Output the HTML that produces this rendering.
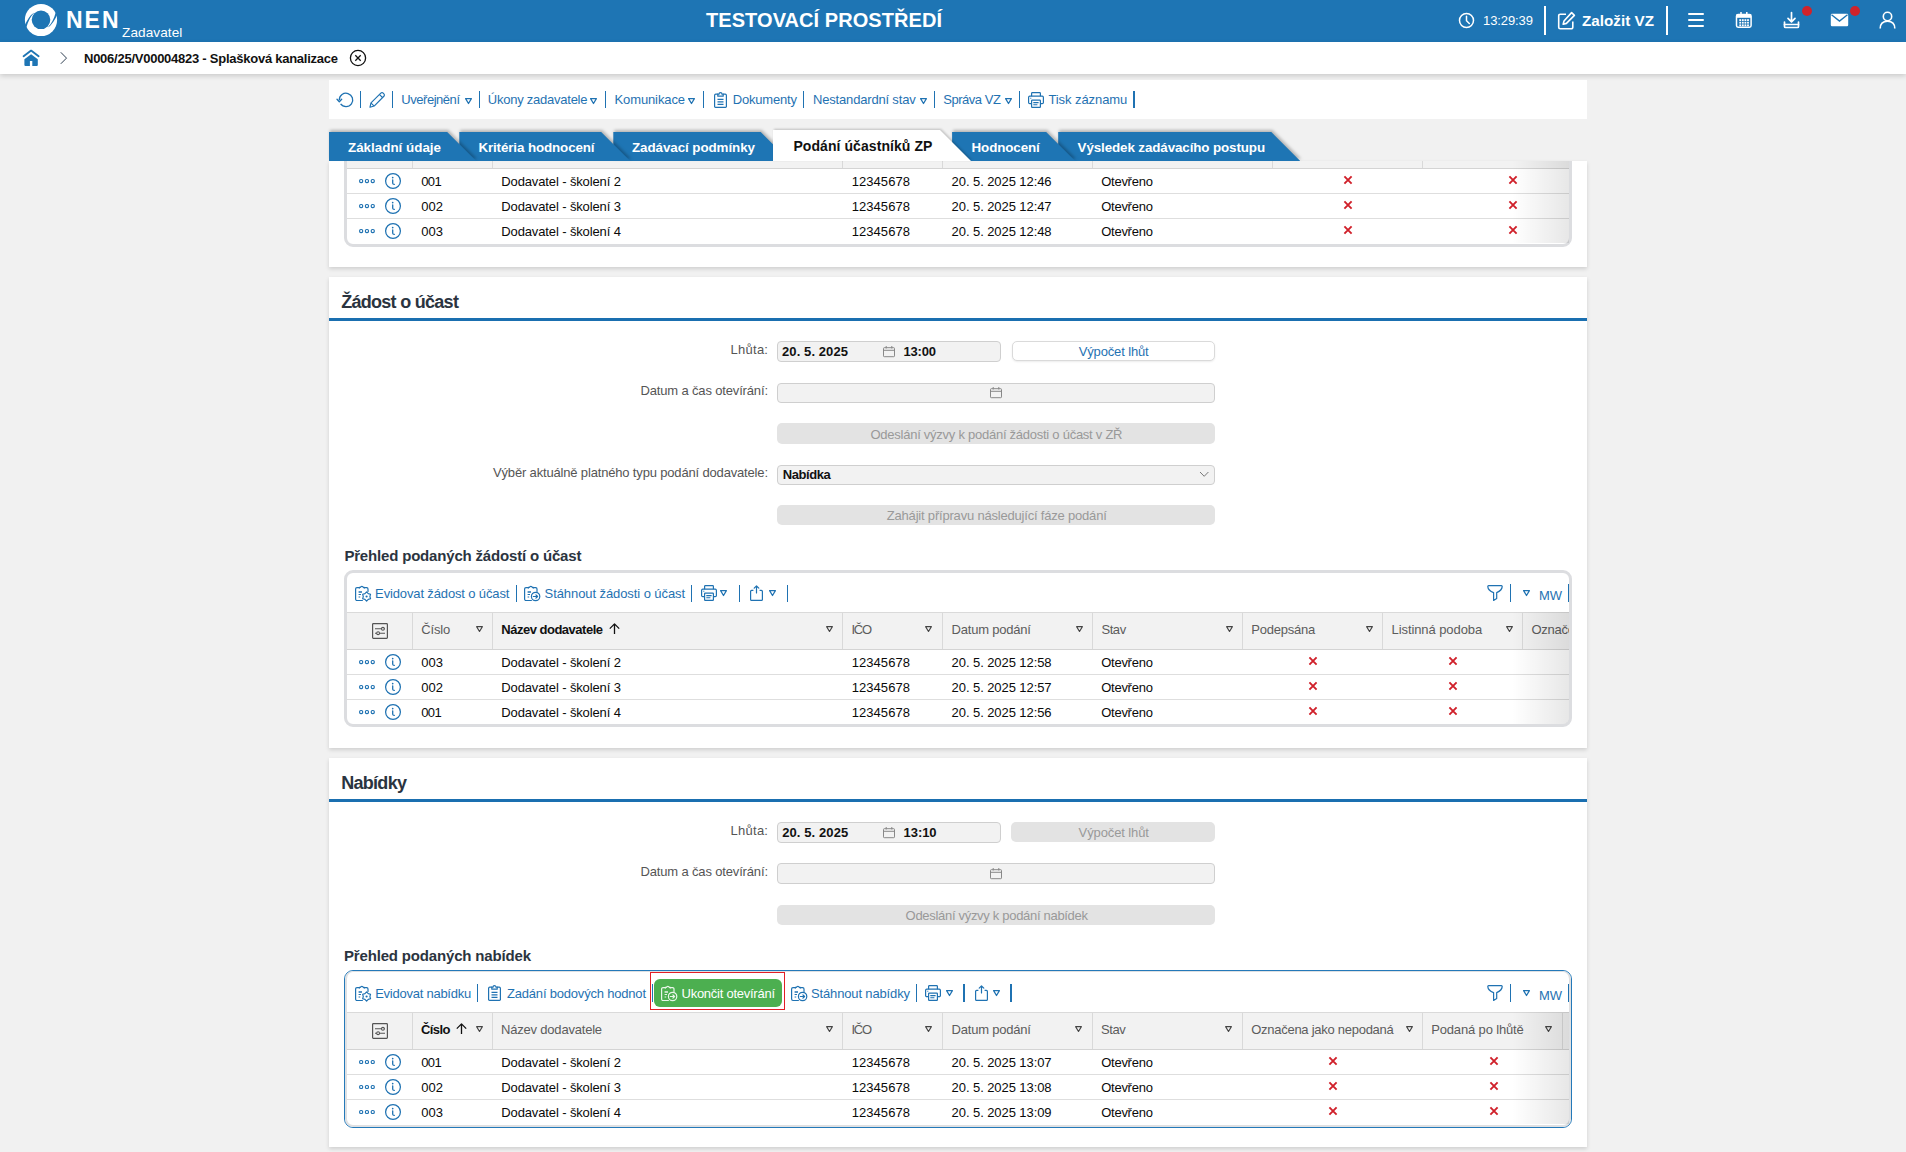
<!DOCTYPE html>
<html><head><meta charset="utf-8"><style>
*{box-sizing:border-box}
html,body{margin:0;padding:0}
body{width:1906px;height:1152px;overflow:hidden;background:#f1f1f1;font-family:"Liberation Sans",sans-serif;position:relative;color:#111;font-size:13px}
.a{position:absolute}
.t{white-space:nowrap}
svg{display:block;overflow:visible}
.panel{background:#fff;box-shadow:0 2px 4px rgba(0,0,0,.14)}
.clip{overflow:hidden}
</style></head><body>
<div class="a" style="left:0;top:0;width:1906px;height:42px;background:#1e75b4"></div>
<svg class="a" style="left:22px;top:1px" width="40" height="40" viewBox="22 1 40 40">
  <circle cx="41" cy="20" r="16.1" fill="#fff"/>
  <circle cx="41" cy="19.8" r="9.3" fill="#1e75b4"/>
  <path d="M34.3 12.4 Q28.8 15.5 24 27 L26.3 27.6 Q28.6 18.5 34.3 12.4 Z" fill="#1e75b4"/>
  <path d="M47.7 27.6 Q53.2 24.5 58 13 L55.7 12.4 Q53.4 21.5 47.7 27.6 Z" fill="#1e75b4"/>
 </svg>
<div class="a t" style="left:66.0px;top:9.03px;font-size:23px;line-height:23px;font-weight:bold;color:#fff;letter-spacing:1.969px;">NEN</div>
<div class="a t" style="left:122.0px;top:26.09px;font-size:13.6px;line-height:13.6px;color:#fff;letter-spacing:0.075px;">Zadavatel</div>
<div class="a t" style="left:706.0px;top:10.37px;font-size:20px;line-height:20px;font-weight:bold;color:#fff;letter-spacing:0.064px;">TESTOVACÍ PROSTŘEDÍ</div>
<svg class="a" style="left:1458px;top:12px" width="17" height="17" viewBox="0 0 17 17" fill="none" stroke="#fff" stroke-width="1.5"><circle cx="8.5" cy="8.5" r="7"/><path d="M8.5 4.2V8.7L11.3 11.5" stroke-linecap="round"/></svg>
<div class="a t" style="left:1483.0px;top:14.00px;font-size:13px;line-height:13px;color:#fff;letter-spacing:-0.087px;">13:29:39</div>
<div class="a" style="left:1543.5px;top:6px;width:2px;height:29px;background:#fff"></div>
<svg class="a" style="left:1557px;top:11px" width="19" height="19" viewBox="0 0 19 19" fill="none" stroke="#fff" stroke-width="1.6" stroke-linejoin="round"><path d="M9 3.2H3.2A1.5 1.5 0 0 0 1.7 4.7V16.3A1.5 1.5 0 0 0 3.2 17.8H14.3A1.5 1.5 0 0 0 15.8 16.3V10.5"/><path d="M14.6 1.6L17.4 4.4L9.4 12.4L6.2 13.2L7 10Z"/></svg>
<div class="a t" style="left:1582.0px;top:13.33px;font-size:15.2px;line-height:15.2px;font-weight:bold;color:#fff;letter-spacing:0.031px;">Založit VZ</div>
<div class="a" style="left:1666px;top:6px;width:2px;height:29px;background:#fff"></div>
<div class="a" style="left:1688px;top:12.7px;width:16px;height:2.7px;background:#fff;border-radius:1.4px"></div>
<div class="a" style="left:1688px;top:18.7px;width:16px;height:2.7px;background:#fff;border-radius:1.4px"></div>
<div class="a" style="left:1688px;top:24.7px;width:16px;height:2.7px;background:#fff;border-radius:1.4px"></div>
<svg class="a" style="left:1734px;top:10px" width="20" height="20" viewBox="1734 10 20 20"><rect x="1736.5" y="14.6" width="14.6" height="12.6" rx="1.6" fill="none" stroke="#fff" stroke-width="1.5"/><rect x="1736.5" y="14.6" width="14.6" height="3.2" fill="#fff"/><path d="M1741 12V16M1746.8 12V16" stroke="#fff" stroke-width="1.5"/><rect x="1739.3" y="19.2" width="1.8" height="1.8" fill="#fff"/><rect x="1739.3" y="21.8" width="1.8" height="1.8" fill="#fff"/><rect x="1739.3" y="24.4" width="1.8" height="1.8" fill="#fff"/><rect x="1741.9" y="19.2" width="1.8" height="1.8" fill="#fff"/><rect x="1741.9" y="21.8" width="1.8" height="1.8" fill="#fff"/><rect x="1741.9" y="24.4" width="1.8" height="1.8" fill="#fff"/><rect x="1744.5" y="19.2" width="1.8" height="1.8" fill="#fff"/><rect x="1744.5" y="21.8" width="1.8" height="1.8" fill="#fff"/><rect x="1744.5" y="24.4" width="1.8" height="1.8" fill="#fff"/><rect x="1747.1" y="19.2" width="1.8" height="1.8" fill="#fff"/><rect x="1747.1" y="21.8" width="1.8" height="1.8" fill="#fff"/><rect x="1747.1" y="24.4" width="1.8" height="1.8" fill="#fff"/></svg>
<svg class="a" style="left:1783px;top:11px" width="17" height="18" viewBox="0 0 17 18" fill="none" stroke="#fff" stroke-width="1.7" stroke-linecap="round" stroke-linejoin="round"><path d="M8.5 1.5V10.5M5 7.3L8.5 10.8L12 7.3"/><path d="M1.5 11V15.5A1 1 0 0 0 2.5 16.5H14.5A1 1 0 0 0 15.5 15.5V11"/><path d="M1.5 13.5H15.5"/></svg>
<div class="a" style="left:1802px;top:6px;width:10px;height:10px;border-radius:50%;background:#d0232b"></div>
<svg class="a" style="left:1830px;top:13px" width="19" height="14" viewBox="0 0 19 14"><rect x="0.8" y="0.8" width="17.4" height="12.4" rx="1.2" fill="#fff"/><path d="M1.5 1.8L9.5 8L17.5 1.8" fill="none" stroke="#1e75b4" stroke-width="1.4"/></svg>
<div class="a" style="left:1850px;top:6px;width:10px;height:10px;border-radius:50%;background:#d0232b"></div>
<svg class="a" style="left:1879px;top:11px" width="17" height="18" viewBox="0 0 17 18" fill="none" stroke="#fff" stroke-width="1.6"><circle cx="8.5" cy="5.5" r="4.2"/><path d="M1.2 17.5C1.2 12.5 4.5 10.2 8.5 10.2S15.8 12.5 15.8 17.5"/></svg>
<div class="a" style="left:0;top:42px;width:1906px;height:32px;background:#fff;box-shadow:0 2px 5px rgba(0,0,0,.16)"></div>
<svg class="a" style="left:20px;top:47px" width="22" height="22" viewBox="20 47 22 22"><path d="M23.6 56.2L31.1 50.6L38.6 56.2" fill="none" stroke="#1e75b4" stroke-width="1.9" stroke-linecap="round" stroke-linejoin="round"/><path d="M31.1 54.3L37.8 59.2V65A1 1 0 0 1 36.8 66H32.3V61H29.9V66H25.4A1 1 0 0 1 24.4 65V59.2Z" fill="#1e75b4"/></svg>
<svg class="a" style="left:58px;top:50px" width="11" height="16" viewBox="58 50 11 16" fill="none" stroke="#2d3e50" stroke-width="1"><path d="M60.8 52.3L66.5 58.1L60.8 63.8"/></svg>
<div class="a t" style="left:84.0px;top:52.00px;font-size:13px;line-height:13px;font-weight:bold;color:#111;letter-spacing:-0.251px;">N006/25/V00004823 - Splašková kanalizace</div>
<svg class="a" style="left:349px;top:48.7px" width="18" height="18" viewBox="0 0 18 18" fill="none" stroke="#111" stroke-width="1.3"><circle cx="9" cy="9" r="7.6"/><path d="M6.3 6.3L11.7 11.7M11.7 6.3L6.3 11.7"/></svg>
<div class="a" style="left:329px;top:80px;width:1258px;height:39px;background:#fff"></div>
<svg class="a" style="left:336.2px;top:91px" width="20" height="18" viewBox="336.2 91 20 18" ><path d="M339.50 100.00A6.7 6.7 0 1 1 340.80 103.90" fill="none" stroke="#1f72b2" stroke-width="1.3"/><path d="M337.20 99.20L339.50 101.80L341.90 99.20" fill="none" stroke="#1f72b2" stroke-width="1.3" stroke-linecap="round" stroke-linejoin="round"/></svg>
<div class="a" style="left:359.65px;top:91px;width:1.5px;height:17px;background:#1f72b2"></div>
<svg class="a" style="left:367px;top:89px" width="21" height="21" viewBox="367 89 21 21" ><g transform="translate(370 107.4) scale(.9) translate(-370 -107.4)"><path d="M370 107.2L371.1 102.4L382 91.6A1.9 1.9 0 0 1 384.7 91.6L385.4 92.3A1.9 1.9 0 0 1 385.4 95L374.6 105.9Z" fill="none" stroke="#1f72b2" stroke-width="1.3" stroke-linejoin="round"/><path d="M371.2 102.6L374.4 105.8M380.6 93.1L383.9 96.4" stroke="#1f72b2" stroke-width="1.25"/></g></svg>
<div class="a" style="left:391.75px;top:91px;width:1.5px;height:17px;background:#1f72b2"></div>
<div class="a t" style="left:401.3px;top:92.50px;font-size:13px;line-height:13px;color:#1f72b2;letter-spacing:-0.464px;">Uveřejnění</div>
<svg class="a" style="left:464px;top:96.6px" width="9" height="8" viewBox="464 96.6 9 8" ><path d="M465.6 98.19999999999999H471.4L468.5 103.1Z" fill="none" stroke="#1f72b2" stroke-width="1.25" stroke-linejoin="round"/></svg>
<div class="a" style="left:478.75px;top:91px;width:1.5px;height:17px;background:#1f72b2"></div>
<div class="a t" style="left:487.8px;top:92.50px;font-size:13px;line-height:13px;color:#1f72b2;letter-spacing:-0.243px;">Úkony zadavatele</div>
<svg class="a" style="left:589px;top:96.6px" width="9" height="8" viewBox="589 96.6 9 8" ><path d="M590.6 98.19999999999999H596.4L593.5 103.1Z" fill="none" stroke="#1f72b2" stroke-width="1.25" stroke-linejoin="round"/></svg>
<div class="a" style="left:604.75px;top:91px;width:1.5px;height:17px;background:#1f72b2"></div>
<div class="a t" style="left:614.5px;top:92.50px;font-size:13px;line-height:13px;color:#1f72b2;letter-spacing:-0.116px;">Komunikace</div>
<svg class="a" style="left:687px;top:96.6px" width="9" height="8" viewBox="687 96.6 9 8" ><path d="M688.6 98.19999999999999H694.4L691.5 103.1Z" fill="none" stroke="#1f72b2" stroke-width="1.25" stroke-linejoin="round"/></svg>
<div class="a" style="left:702.75px;top:91px;width:1.5px;height:17px;background:#1f72b2"></div>
<svg class="a" style="left:713px;top:91px" width="15" height="18" viewBox="713 91 15 18" ><path d="M718 94.2H715.8A1.2 1.2 0 0 0 714.6 95.4V106.6A1.2 1.2 0 0 0 715.8 107.4H725.2A1.2 1.2 0 0 0 726.4 106.6V95.4A1.2 1.2 0 0 0 725.2 94.2H723" fill="none" stroke="#1f72b2" stroke-width="1.2"/><path d="M717.8 96.2V94.2H719A1.5 1.5 0 0 1 722 94.2H723.2V96.2Z" fill="none" stroke="#1f72b2" stroke-width="1.2" stroke-linejoin="round"/><path d="M717.5 99.3H723.5M717.5 101.8H723.5M717.5 104.3H723.5" stroke="#1f72b2" stroke-width="1.3"/></svg>
<div class="a t" style="left:732.7px;top:92.50px;font-size:13px;line-height:13px;color:#1f72b2;letter-spacing:-0.181px;">Dokumenty</div>
<div class="a" style="left:802.75px;top:91px;width:1.5px;height:17px;background:#1f72b2"></div>
<div class="a t" style="left:813.0px;top:92.50px;font-size:13px;line-height:13px;color:#1f72b2;letter-spacing:-0.176px;">Nestandardní stav</div>
<svg class="a" style="left:918.8px;top:96.6px" width="9" height="8" viewBox="918.8 96.6 9 8" ><path d="M920.4 98.19999999999999H926.1999999999999L923.3 103.1Z" fill="none" stroke="#1f72b2" stroke-width="1.25" stroke-linejoin="round"/></svg>
<div class="a" style="left:933.75px;top:91px;width:1.5px;height:17px;background:#1f72b2"></div>
<div class="a t" style="left:943.3px;top:92.50px;font-size:13px;line-height:13px;color:#1f72b2;letter-spacing:-0.478px;">Správa VZ</div>
<svg class="a" style="left:1003.8px;top:96.6px" width="9" height="8" viewBox="1003.8 96.6 9 8" ><path d="M1005.4 98.19999999999999H1011.1999999999999L1008.3 103.1Z" fill="none" stroke="#1f72b2" stroke-width="1.25" stroke-linejoin="round"/></svg>
<div class="a" style="left:1018.75px;top:91px;width:1.5px;height:17px;background:#1f72b2"></div>
<svg class="a" style="left:1027.2px;top:91.2px" width="18" height="18" viewBox="1027.2 91.2 18 18" ><path d="M1031.8 96.4V93.60000000000001A0.8 0.8 0 0 1 1032.6000000000001 92.8H1039.8A0.8 0.8 0 0 1 1040.6000000000001 93.60000000000001V96.4" fill="none" stroke="#1f72b2" stroke-width="1.2"/><path d="M1031.8 103.8H1030.0A1.2 1.2 0 0 1 1028.8 102.60000000000001V97.60000000000001A1.2 1.2 0 0 1 1030.0 96.4H1042.4A1.2 1.2 0 0 1 1043.6000000000001 97.60000000000001V102.60000000000001A1.2 1.2 0 0 1 1042.4 103.8H1040.6000000000001" fill="none" stroke="#1f72b2" stroke-width="1.2"/><rect x="1031.8" y="100.4" width="8.8" height="7.2" rx="0.6" fill="none" stroke="#1f72b2" stroke-width="1.2"/><path d="M1033.5 102.8H1038.8M1033.5 105.0H1037.6000000000001M1030.5 98.5H1031.5" stroke="#1f72b2" stroke-width="1.1"/></svg>
<div class="a t" style="left:1048.4px;top:92.50px;font-size:13px;line-height:13px;color:#1f72b2;letter-spacing:-0.074px;">Tisk záznamu</div>
<div class="a" style="left:1133.05px;top:91px;width:1.5px;height:17px;background:#1f72b2"></div>
<div class="a" style="left:0;top:0;width:1906px;height:170px;z-index:16;filter:drop-shadow(1.4px -1.1px 1.4px rgba(0,0,0,.25));pointer-events:none"><div class="a" style="left:329px;top:132px;width:147.2px;height:29px;background:#1e75b4;clip-path:polygon(0 0,118.19999999999999px 0,100% 100%,0 100%)"></div></div>
<div class="a t" style="left:348.0px;top:140.56px;font-size:13.4px;line-height:13.4px;font-weight:bold;color:#fff;letter-spacing:-0.001px;z-index:30">Základní údaje</div>
<div class="a" style="left:0;top:0;width:1906px;height:170px;z-index:15;filter:drop-shadow(1.4px -1.1px 1.4px rgba(0,0,0,.25));pointer-events:none"><div class="a" style="left:459.3px;top:132px;width:170.90000000000003px;height:29px;background:#1e75b4;clip-path:polygon(0 0,141.90000000000003px 0,100% 100%,0 100%)"></div></div>
<div class="a t" style="left:478.4px;top:140.56px;font-size:13.4px;line-height:13.4px;font-weight:bold;color:#fff;letter-spacing:-0.124px;z-index:30">Kritéria hodnocení</div>
<div class="a" style="left:0;top:0;width:1906px;height:170px;z-index:14;filter:drop-shadow(1.4px -1.1px 1.4px rgba(0,0,0,.25));pointer-events:none"><div class="a" style="left:613.3px;top:132px;width:176.4000000000001px;height:29px;background:#1e75b4;clip-path:polygon(0 0,147.4000000000001px 0,100% 100%,0 100%)"></div></div>
<div class="a t" style="left:632.0px;top:140.56px;font-size:13.4px;line-height:13.4px;font-weight:bold;color:#fff;letter-spacing:-0.080px;z-index:30">Zadávací podmínky</div>
<div class="a" style="left:0;top:0;width:1906px;height:170px;z-index:20;filter:drop-shadow(1.2px -0.3px 1px rgba(0,0,0,.2));pointer-events:none"><div class="a" style="left:773px;top:130px;width:198px;height:31px;background:#fff;clip-path:polygon(0 0,167px 0,100% 100%,0 100%)"></div></div>
<div class="a t" style="left:793.4px;top:138.85px;font-size:14px;line-height:14px;font-weight:bold;color:#111;letter-spacing:0.072px;z-index:30">Podání účastníků ZP</div>
<div class="a" style="left:0;top:0;width:1906px;height:170px;z-index:13;filter:drop-shadow(1.4px -1.1px 1.4px rgba(0,0,0,.25));pointer-events:none"><div class="a" style="left:952.1px;top:132px;width:123.10000000000002px;height:29px;background:#1e75b4;clip-path:polygon(0 0,94.10000000000002px 0,100% 100%,0 100%)"></div></div>
<div class="a t" style="left:971.5px;top:140.56px;font-size:13.4px;line-height:13.4px;font-weight:bold;color:#fff;letter-spacing:-0.111px;z-index:30">Hodnocení</div>
<div class="a" style="left:0;top:0;width:1906px;height:170px;z-index:12;filter:drop-shadow(1.4px -1.1px 1.4px rgba(0,0,0,.25));pointer-events:none"><div class="a" style="left:1058.2px;top:132px;width:242.0999999999999px;height:29px;background:#1e75b4;clip-path:polygon(0 0,213.0999999999999px 0,100% 100%,0 100%)"></div></div>
<div class="a t" style="left:1077.6px;top:140.56px;font-size:13.4px;line-height:13.4px;font-weight:bold;color:#fff;letter-spacing:-0.116px;z-index:30">Výsledek zadávacího postupu</div>
<div class="a panel" style="left:329px;top:161px;width:1258px;height:106px;"></div>
<div class="a" style="left:329px;top:161px;width:1258px;height:106px;overflow:hidden"><div class="a" style="left:-329px;top:-161px;width:1906px;height:1152px">
<div class="a" style="left:344px;top:120px;width:1228px;height:127px;border:3px solid #dcdde0;border-radius:9px;background:#fff"></div>
<div class="a" style="left:347px;top:123px;width:1222px;height:45px;background:#f2f2f2"></div>
<div class="a" style="left:347px;top:168px;width:1222px;height:1px;background:#d4d4d4"></div>
<div class="a" style="left:412px;top:123px;width:1px;height:45px;background:#d9d9d9"></div>
<div class="a" style="left:492px;top:123px;width:1px;height:45px;background:#d9d9d9"></div>
<div class="a" style="left:842px;top:123px;width:1px;height:45px;background:#d9d9d9"></div>
<div class="a" style="left:942px;top:123px;width:1px;height:45px;background:#d9d9d9"></div>
<div class="a" style="left:1092px;top:123px;width:1px;height:45px;background:#d9d9d9"></div>
<div class="a" style="left:1272px;top:123px;width:1px;height:45px;background:#d9d9d9"></div>
<div class="a" style="left:1422px;top:123px;width:1px;height:45px;background:#d9d9d9"></div>
<svg class="a" style="left:358px;top:177px" width="18" height="8" viewBox="358 177 18 8" ><rect x="359.60" y="179.45" width="3.1" height="3.1" rx="1.3" fill="none" stroke="#1f72b2" stroke-width="1.15"/><rect x="365.40" y="179.45" width="3.1" height="3.1" rx="1.3" fill="none" stroke="#1f72b2" stroke-width="1.15"/><rect x="371.20" y="179.45" width="3.1" height="3.1" rx="1.3" fill="none" stroke="#1f72b2" stroke-width="1.15"/></svg>
<svg class="a" style="left:384px;top:172px" width="18" height="18" viewBox="384 172 18 18" ><circle cx="393" cy="181" r="7.4" fill="none" stroke="#1f72b2" stroke-width="1.25"/><path d="M392.7 179.8V183.2Q392.8 184.3 394.3 184.4" fill="none" stroke="#1f72b2" stroke-width="1.3" stroke-linecap="round"/><circle cx="392.7" cy="177.6" r="0.85" fill="#1f72b2"/></svg>
<div class="a t" style="left:421.2px;top:175.30px;font-size:13px;line-height:13px;color:#0a0a0a;letter-spacing:-0.602px;">001</div>
<div class="a t" style="left:501.3px;top:175.30px;font-size:13px;line-height:13px;color:#0a0a0a;letter-spacing:-0.126px;">Dodavatel - školení 2</div>
<div class="a t" style="left:851.8px;top:175.30px;font-size:13px;line-height:13px;color:#0a0a0a;letter-spacing:0.037px;">12345678</div>
<div class="a t" style="left:951.6px;top:175.30px;font-size:13px;line-height:13px;color:#0a0a0a;letter-spacing:-0.075px;">20. 5. 2025 12:46</div>
<div class="a t" style="left:1101.2px;top:175.30px;font-size:13px;line-height:13px;color:#0a0a0a;letter-spacing:-0.255px;">Otevřeno</div>
<svg class="a" style="left:1342.1px;top:174.2px" width="12" height="12" viewBox="1342.1 174.2 12 12" ><path d="M1344.5 176.6L1351.6999999999998 183.79999999999998M1351.6999999999998 176.6L1344.5 183.79999999999998" stroke="#d0202a" stroke-width="1.9"/></svg>
<svg class="a" style="left:1507.1px;top:174.2px" width="12" height="12" viewBox="1507.1 174.2 12 12" ><path d="M1509.5 176.6L1516.6999999999998 183.79999999999998M1516.6999999999998 176.6L1509.5 183.79999999999998" stroke="#d0202a" stroke-width="1.9"/></svg>
<div class="a" style="left:347px;top:193px;width:1222px;height:1px;background:#dedede"></div>
<svg class="a" style="left:358px;top:202px" width="18" height="8" viewBox="358 202 18 8" ><rect x="359.60" y="204.45" width="3.1" height="3.1" rx="1.3" fill="none" stroke="#1f72b2" stroke-width="1.15"/><rect x="365.40" y="204.45" width="3.1" height="3.1" rx="1.3" fill="none" stroke="#1f72b2" stroke-width="1.15"/><rect x="371.20" y="204.45" width="3.1" height="3.1" rx="1.3" fill="none" stroke="#1f72b2" stroke-width="1.15"/></svg>
<svg class="a" style="left:384px;top:197px" width="18" height="18" viewBox="384 197 18 18" ><circle cx="393" cy="206" r="7.4" fill="none" stroke="#1f72b2" stroke-width="1.25"/><path d="M392.7 204.8V208.2Q392.8 209.3 394.3 209.4" fill="none" stroke="#1f72b2" stroke-width="1.3" stroke-linecap="round"/><circle cx="392.7" cy="202.6" r="0.85" fill="#1f72b2"/></svg>
<div class="a t" style="left:421.2px;top:200.30px;font-size:13px;line-height:13px;color:#0a0a0a;letter-spacing:0.048px;">002</div>
<div class="a t" style="left:501.3px;top:200.30px;font-size:13px;line-height:13px;color:#0a0a0a;letter-spacing:-0.126px;">Dodavatel - školení 3</div>
<div class="a t" style="left:851.8px;top:200.30px;font-size:13px;line-height:13px;color:#0a0a0a;letter-spacing:0.037px;">12345678</div>
<div class="a t" style="left:951.6px;top:200.30px;font-size:13px;line-height:13px;color:#0a0a0a;letter-spacing:-0.075px;">20. 5. 2025 12:47</div>
<div class="a t" style="left:1101.2px;top:200.30px;font-size:13px;line-height:13px;color:#0a0a0a;letter-spacing:-0.255px;">Otevřeno</div>
<svg class="a" style="left:1342.1px;top:199.2px" width="12" height="12" viewBox="1342.1 199.2 12 12" ><path d="M1344.5 201.6L1351.6999999999998 208.79999999999998M1351.6999999999998 201.6L1344.5 208.79999999999998" stroke="#d0202a" stroke-width="1.9"/></svg>
<svg class="a" style="left:1507.1px;top:199.2px" width="12" height="12" viewBox="1507.1 199.2 12 12" ><path d="M1509.5 201.6L1516.6999999999998 208.79999999999998M1516.6999999999998 201.6L1509.5 208.79999999999998" stroke="#d0202a" stroke-width="1.9"/></svg>
<div class="a" style="left:347px;top:218px;width:1222px;height:1px;background:#dedede"></div>
<svg class="a" style="left:358px;top:227px" width="18" height="8" viewBox="358 227 18 8" ><rect x="359.60" y="229.45" width="3.1" height="3.1" rx="1.3" fill="none" stroke="#1f72b2" stroke-width="1.15"/><rect x="365.40" y="229.45" width="3.1" height="3.1" rx="1.3" fill="none" stroke="#1f72b2" stroke-width="1.15"/><rect x="371.20" y="229.45" width="3.1" height="3.1" rx="1.3" fill="none" stroke="#1f72b2" stroke-width="1.15"/></svg>
<svg class="a" style="left:384px;top:222px" width="18" height="18" viewBox="384 222 18 18" ><circle cx="393" cy="231" r="7.4" fill="none" stroke="#1f72b2" stroke-width="1.25"/><path d="M392.7 229.8V233.2Q392.8 234.3 394.3 234.4" fill="none" stroke="#1f72b2" stroke-width="1.3" stroke-linecap="round"/><circle cx="392.7" cy="227.6" r="0.85" fill="#1f72b2"/></svg>
<div class="a t" style="left:421.2px;top:225.30px;font-size:13px;line-height:13px;color:#0a0a0a;letter-spacing:0.048px;">003</div>
<div class="a t" style="left:501.3px;top:225.30px;font-size:13px;line-height:13px;color:#0a0a0a;letter-spacing:-0.126px;">Dodavatel - školení 4</div>
<div class="a t" style="left:851.8px;top:225.30px;font-size:13px;line-height:13px;color:#0a0a0a;letter-spacing:0.037px;">12345678</div>
<div class="a t" style="left:951.6px;top:225.30px;font-size:13px;line-height:13px;color:#0a0a0a;letter-spacing:-0.075px;">20. 5. 2025 12:48</div>
<div class="a t" style="left:1101.2px;top:225.30px;font-size:13px;line-height:13px;color:#0a0a0a;letter-spacing:-0.255px;">Otevřeno</div>
<svg class="a" style="left:1342.1px;top:224.2px" width="12" height="12" viewBox="1342.1 224.2 12 12" ><path d="M1344.5 226.6L1351.6999999999998 233.79999999999998M1351.6999999999998 226.6L1344.5 233.79999999999998" stroke="#d0202a" stroke-width="1.9"/></svg>
<svg class="a" style="left:1507.1px;top:224.2px" width="12" height="12" viewBox="1507.1 224.2 12 12" ><path d="M1509.5 226.6L1516.6999999999998 233.79999999999998M1516.6999999999998 226.6L1509.5 233.79999999999998" stroke="#d0202a" stroke-width="1.9"/></svg>
<div class="a" style="left:1512px;top:123px;width:57px;height:120px;background:linear-gradient(to right,rgba(0,0,0,0),rgba(0,0,0,.095))"></div>
</div></div>
<div class="a panel" style="left:329px;top:277px;width:1258px;height:471px;"></div>
<div class="a t" style="left:341.2px;top:293.16px;font-size:18px;line-height:18px;font-weight:bold;color:#2b3440;letter-spacing:-0.718px;">Žádost o účast</div>
<div class="a" style="left:329px;top:318px;width:1258px;height:3px;background:#1a6fb0"></div>
<div class="a t" style="left:730.6px;top:343.40px;font-size:13px;line-height:13px;color:#555;letter-spacing:0.249px;">Lhůta:</div>
<div class="a" style="left:777px;top:341px;width:224px;height:21px;background:#f2f2f2;border:1px solid #cfcfcf;border-radius:4px"></div>
<div class="a t" style="left:782.0px;top:345.00px;font-size:13px;line-height:13px;font-weight:bold;color:#111;letter-spacing:0.094px;">20. 5. 2025</div>
<svg class="a" style="left:882px;top:344.5px" width="14" height="13" viewBox="882 344.5 14 13" ><rect x="883.5" y="347.2" width="11" height="9" rx="0.8" fill="none" stroke="#888" stroke-width="1"/><path d="M883.5 349.8H894.5M886.2 345.5V348.0M891.8 345.5V348.0" stroke="#888" stroke-width="1"/></svg>
<div class="a t" style="left:903.5px;top:345.00px;font-size:13px;line-height:13px;font-weight:bold;color:#111;letter-spacing:-0.188px;">13:00</div>
<div class="a" style="left:1011.5px;top:341px;width:203px;height:20px;background:#fff;border:1px solid #dadada;border-radius:5px;box-shadow:0 1px 2px rgba(0,0,0,.08)"></div>
<div class="a t" style="left:1078.7px;top:344.70px;font-size:13px;line-height:13px;color:#1f72b2;letter-spacing:-0.141px;">Výpočet lhůt</div>
<div class="a t" style="left:640.5px;top:384.10px;font-size:13px;line-height:13px;color:#555;letter-spacing:-0.156px;">Datum a čas otevírání:</div>
<div class="a" style="left:777px;top:382.5px;width:438px;height:20.5px;background:#f2f2f2;border:1px solid #cfcfcf;border-radius:4px"></div>
<svg class="a" style="left:989px;top:385.5px" width="14" height="13" viewBox="989 385.5 14 13" ><rect x="990.5" y="388.2" width="11" height="9" rx="0.8" fill="none" stroke="#888" stroke-width="1"/><path d="M990.5 390.8H1001.5M993.2 386.5V389.0M998.8 386.5V389.0" stroke="#888" stroke-width="1"/></svg>
<div class="a" style="left:777px;top:423px;width:438px;height:21px;background:#e3e3e3;border-radius:5px"></div>
<div class="a t" style="left:870.5px;top:428.00px;font-size:13px;line-height:13px;color:#999;letter-spacing:-0.256px;">Odeslání výzvy k podání žádosti o účast v ZŘ</div>
<div class="a t" style="left:493.0px;top:466.00px;font-size:13px;line-height:13px;color:#555;letter-spacing:-0.165px;">Výběr aktuálně platného typu podání dodavatele:</div>
<div class="a" style="left:777px;top:464.5px;width:438px;height:20.5px;background:#f2f2f2;border:1px solid #cfcfcf;border-radius:4px"></div>
<div class="a t" style="left:782.7px;top:468.00px;font-size:13px;line-height:13px;font-weight:bold;color:#111;letter-spacing:-0.430px;">Nabídka</div>
<svg class="a" style="left:1199.3px;top:470.8px" width="10" height="7" viewBox="1199.3 470.8 10 7" ><path d="M1200.3 471.8L1204.5 476.1L1208.7 471.8" fill="none" stroke="#777" stroke-width="1"/></svg>
<div class="a" style="left:777px;top:505px;width:438px;height:20px;background:#e3e3e3;border-radius:5px"></div>
<div class="a t" style="left:886.8px;top:509.30px;font-size:13px;line-height:13px;color:#999;letter-spacing:-0.196px;">Zahájit přípravu následující fáze podání</div>
<div class="a t" style="left:344.4px;top:547.80px;font-size:15px;line-height:15px;font-weight:bold;color:#2b3440;letter-spacing:-0.179px;">Přehled podaných žádostí o účast</div>
<div class="a" style="left:344px;top:570px;width:1228px;height:157px;border:3px solid #dcdde0;border-radius:9px;background:#fff;overflow:hidden"><div class="a" style="left:-347px;top:-573px;width:1906px;height:1152px">
<svg class="a" style="left:354px;top:584px" width="18" height="18" viewBox="354 584 18 18" ><path d="M359.6 587.6H357A1.4 1.4 0 0 0 355.6 589V599.1A1.4 1.4 0 0 0 357 600.5H362.4" fill="none" stroke="#1f72b2" stroke-width="1.2" stroke-linecap="round"/><path d="M364 587.6H366.6A1.4 1.4 0 0 1 368 589V591.5" fill="none" stroke="#1f72b2" stroke-width="1.2" stroke-linecap="round"/><path d="M359.4 588.6V587.4H360.4A1.5 1.5 0 0 1 363.3 587.4H364.3V588.6" fill="none" stroke="#1f72b2" stroke-width="1.2" stroke-linejoin="round"/><path d="M358.6 592H362" stroke="#1f72b2" stroke-width="1.5"/><path d="M358.6 594.5H361M358.6 597H360.2" stroke="#1f72b2" stroke-width="1.2"/><path d="M366.60 591.90L368.25 593.64L370.58 594.20L369.90 596.50L370.58 598.80L368.25 599.36L366.60 601.10L364.95 599.36L362.62 598.80L363.30 596.50L362.62 594.20L364.95 593.64Z" fill="none" stroke="#1f72b2" stroke-width="1.15" stroke-linejoin="round"/><circle cx="366.6" cy="596.5" r="1.1" fill="#1f72b2"/></svg>
<div class="a t" style="left:375.1px;top:587.20px;font-size:13px;line-height:13px;color:#1f72b2;letter-spacing:-0.137px;">Evidovat žádost o účast</div>
<div class="a" style="left:515.75px;top:584.6px;width:1.5px;height:17.0px;background:#1f72b2"></div>
<svg class="a" style="left:523.4px;top:584px" width="18" height="18" viewBox="523.4 584 18 18" ><path d="M529.0 587.6H526.4A1.4 1.4 0 0 0 525.0 589V599.1A1.4 1.4 0 0 0 526.4 600.5H531.8" fill="none" stroke="#1f72b2" stroke-width="1.2" stroke-linecap="round"/><path d="M533.4 587.6H536.0A1.4 1.4 0 0 1 537.4 589V591.5" fill="none" stroke="#1f72b2" stroke-width="1.2" stroke-linecap="round"/><path d="M528.8 588.6V587.4H529.8A1.5 1.5 0 0 1 532.6999999999999 587.4H533.6999999999999V588.6" fill="none" stroke="#1f72b2" stroke-width="1.2" stroke-linejoin="round"/><path d="M528.0 592H531.4" stroke="#1f72b2" stroke-width="1.5"/><path d="M528.0 594.5H530.4M528.0 597H529.6" stroke="#1f72b2" stroke-width="1.2"/><circle cx="536.0" cy="596.5" r="4.2" fill="none" stroke="#1f72b2" stroke-width="1.2"/><path d="M533.6999999999999 596.5H538.0M536.3 594.8L538.0 596.5L536.3 598.2" fill="none" stroke="#1f72b2" stroke-width="1.2" stroke-linecap="round" stroke-linejoin="round"/></svg>
<div class="a t" style="left:544.6px;top:587.20px;font-size:13px;line-height:13px;color:#1f72b2;letter-spacing:-0.082px;">Stáhnout žádosti o účast</div>
<div class="a" style="left:690.75px;top:584.6px;width:1.5px;height:17.0px;background:#1f72b2"></div>
<svg class="a" style="left:699.5px;top:584px" width="18" height="18" viewBox="699.5 584 18 18" ><path d="M704.1 589.2V586.4A0.8 0.8 0 0 1 704.9 585.6H712.1A0.8 0.8 0 0 1 712.9 586.4V589.2" fill="none" stroke="#1f72b2" stroke-width="1.2"/><path d="M704.1 596.6H702.3A1.2 1.2 0 0 1 701.1 595.4V590.4A1.2 1.2 0 0 1 702.3 589.2H714.7A1.2 1.2 0 0 1 715.9 590.4V595.4A1.2 1.2 0 0 1 714.7 596.6H712.9" fill="none" stroke="#1f72b2" stroke-width="1.2"/><rect x="704.1" y="593.2" width="8.8" height="7.2" rx="0.6" fill="none" stroke="#1f72b2" stroke-width="1.2"/><path d="M705.8 595.6H711.1M705.8 597.8H709.9M702.8 591.3H703.8" stroke="#1f72b2" stroke-width="1.1"/></svg>
<svg class="a" style="left:719.4px;top:589.2px" width="9" height="8" viewBox="719.4 589.2 9 8" ><path d="M721.0 590.8000000000001H726.8L723.9 595.7Z" fill="none" stroke="#1f72b2" stroke-width="1.25" stroke-linejoin="round"/></svg>
<div class="a" style="left:738.75px;top:584.6px;width:1.5px;height:17.0px;background:#1f72b2"></div>
<svg class="a" style="left:749.1px;top:584px" width="15" height="18" viewBox="749.1 584 15 18" ><path d="M753.5 590.4H751.7A1 1 0 0 0 750.7 591.4V599.4A1 1 0 0 0 751.7 600.4H761.5A1 1 0 0 0 762.5 599.4V591.4A1 1 0 0 0 761.5 590.4H759.7" fill="none" stroke="#1f72b2" stroke-width="1.2"/><path d="M756.6 593V586M754.3000000000001 588.2L756.6 585.9L758.9 588.2" fill="none" stroke="#1f72b2" stroke-width="1.2" stroke-linecap="round" stroke-linejoin="round"/></svg>
<svg class="a" style="left:767.5px;top:589.2px" width="9" height="8" viewBox="767.5 589.2 9 8" ><path d="M769.1 590.8000000000001H774.9L772.0 595.7Z" fill="none" stroke="#1f72b2" stroke-width="1.25" stroke-linejoin="round"/></svg>
<div class="a" style="left:786.65px;top:584.6px;width:1.5px;height:17.0px;background:#1f72b2"></div>
<svg class="a" style="left:1486px;top:584px" width="18" height="18" viewBox="1486 584 18 18" ><path d="M1487.8 586.6A0.9 0.9 0 0 1 1488.6 585.7H1501.4A0.9 0.9 0 0 1 1502.2 586.6C1502 590 1498.5 591.8 1496.7 592.6V598.6L1493.6 600.4V592.6C1491.5 591.8 1488 590 1487.8 586.6Z" fill="none" stroke="#1f72b2" stroke-width="1.2" stroke-linejoin="round"/></svg>
<div class="a" style="left:1509.75px;top:584px;width:1.5px;height:18px;background:#1f72b2"></div>
<svg class="a" style="left:1522px;top:589px" width="9" height="8" viewBox="1522 589 9 8" ><path d="M1523.6 590.6H1529.4L1526.5 595.5Z" fill="none" stroke="#1f72b2" stroke-width="1.25" stroke-linejoin="round"/></svg>
<div class="a t" style="left:1539.0px;top:589.00px;font-size:13px;line-height:13px;color:#1f72b2;letter-spacing:-0.109px;">MW</div>
<div class="a" style="left:1567.75px;top:584px;width:1.5px;height:18px;background:#1f72b2"></div>
<div class="a" style="left:347px;top:612px;width:1222px;height:1px;background:#dadada"></div>
<div class="a" style="left:347px;top:613px;width:1222px;height:36px;background:#f2f2f2"></div>
<div class="a" style="left:347px;top:649px;width:1222px;height:1px;background:#d4d4d4"></div>
<div class="a" style="left:412px;top:613px;width:1px;height:36px;background:#d9d9d9"></div>
<div class="a" style="left:492px;top:613px;width:1px;height:36px;background:#d9d9d9"></div>
<div class="a" style="left:842px;top:613px;width:1px;height:36px;background:#d9d9d9"></div>
<div class="a" style="left:942px;top:613px;width:1px;height:36px;background:#d9d9d9"></div>
<div class="a" style="left:1092px;top:613px;width:1px;height:36px;background:#d9d9d9"></div>
<div class="a" style="left:1242px;top:613px;width:1px;height:36px;background:#d9d9d9"></div>
<div class="a" style="left:1382px;top:613px;width:1px;height:36px;background:#d9d9d9"></div>
<div class="a" style="left:1522px;top:613px;width:1px;height:36px;background:#d9d9d9"></div>
<svg class="a" style="left:371px;top:622px" width="18" height="18" viewBox="371 622 18 18" ><rect x="372.6" y="623.6" width="14.8" height="14.8" rx="0.8" fill="none" stroke="#555" stroke-width="1.2"/><path d="M375 628.8H381.6M384.2 628.8H385M375 633.2H376.8M379.4 633.2H385" stroke="#555" stroke-width="1.1"/><circle cx="382.9" cy="628.8" r="1.4" fill="none" stroke="#555" stroke-width="1.1"/><circle cx="378.1" cy="633.2" r="1.4" fill="none" stroke="#555" stroke-width="1.1"/></svg>
<div class="a t" style="left:421.3px;top:622.80px;font-size:13px;line-height:13px;color:#5c5c5c;letter-spacing:-0.156px;">Číslo</div>
<svg class="a" style="left:474.6px;top:625px" width="9" height="8" viewBox="474.6 625 9 8" ><path d="M476.20000000000005 626.6H482.0L479.1 631.5Z" fill="none" stroke="#444" stroke-width="1.1" stroke-linejoin="round"/></svg>
<div class="a t" style="left:501.3px;top:622.80px;font-size:13px;line-height:13px;font-weight:bold;color:#111;letter-spacing:-0.494px;">Název dodavatele</div>
<svg class="a" style="left:607.6px;top:622.4px" width="13" height="13" viewBox="607.6 622.4 13 13" ><path d="M614.1 634.4V624.4M609.4 629.0L614.1 624.3L618.8000000000001 629.0" fill="none" stroke="#111" stroke-width="1.3" stroke-linejoin="round"/></svg>
<svg class="a" style="left:824.5px;top:625px" width="9" height="8" viewBox="824.5 625 9 8" ><path d="M826.1 626.6H831.9L829.0 631.5Z" fill="none" stroke="#444" stroke-width="1.1" stroke-linejoin="round"/></svg>
<div class="a t" style="left:851.5px;top:622.80px;font-size:13px;line-height:13px;color:#5c5c5c;letter-spacing:-1.262px;">IČO</div>
<svg class="a" style="left:924.3px;top:625px" width="9" height="8" viewBox="924.3 625 9 8" ><path d="M925.9 626.6H931.6999999999999L928.8 631.5Z" fill="none" stroke="#444" stroke-width="1.1" stroke-linejoin="round"/></svg>
<div class="a t" style="left:951.6px;top:622.80px;font-size:13px;line-height:13px;color:#5c5c5c;letter-spacing:-0.207px;">Datum podání</div>
<svg class="a" style="left:1074.6px;top:625px" width="9" height="8" viewBox="1074.6 625 9 8" ><path d="M1076.1999999999998 626.6H1082.0L1079.1 631.5Z" fill="none" stroke="#444" stroke-width="1.1" stroke-linejoin="round"/></svg>
<div class="a t" style="left:1101.4px;top:622.80px;font-size:13px;line-height:13px;color:#5c5c5c;letter-spacing:-0.405px;">Stav</div>
<svg class="a" style="left:1224.5px;top:625px" width="9" height="8" viewBox="1224.5 625 9 8" ><path d="M1226.1 626.6H1231.9L1229.0 631.5Z" fill="none" stroke="#444" stroke-width="1.1" stroke-linejoin="round"/></svg>
<div class="a t" style="left:1251.3px;top:622.80px;font-size:13px;line-height:13px;color:#5c5c5c;letter-spacing:-0.223px;">Podepsána</div>
<svg class="a" style="left:1364.5px;top:625px" width="9" height="8" viewBox="1364.5 625 9 8" ><path d="M1366.1 626.6H1371.9L1369.0 631.5Z" fill="none" stroke="#444" stroke-width="1.1" stroke-linejoin="round"/></svg>
<div class="a t" style="left:1391.5px;top:622.80px;font-size:13px;line-height:13px;color:#5c5c5c;letter-spacing:-0.079px;">Listinná podoba</div>
<svg class="a" style="left:1504.5px;top:625px" width="9" height="8" viewBox="1504.5 625 9 8" ><path d="M1506.1 626.6H1511.9L1509.0 631.5Z" fill="none" stroke="#444" stroke-width="1.1" stroke-linejoin="round"/></svg>
<div class="a t" style="left:1531.4px;top:622.80px;font-size:13px;line-height:13px;color:#5c5c5c;letter-spacing:-0.266px;">Označena jako nepodaná</div>
<svg class="a" style="left:358px;top:658px" width="18" height="8" viewBox="358 658 18 8" ><rect x="359.60" y="660.45" width="3.1" height="3.1" rx="1.3" fill="none" stroke="#1f72b2" stroke-width="1.15"/><rect x="365.40" y="660.45" width="3.1" height="3.1" rx="1.3" fill="none" stroke="#1f72b2" stroke-width="1.15"/><rect x="371.20" y="660.45" width="3.1" height="3.1" rx="1.3" fill="none" stroke="#1f72b2" stroke-width="1.15"/></svg>
<svg class="a" style="left:384px;top:653px" width="18" height="18" viewBox="384 653 18 18" ><circle cx="393" cy="662" r="7.4" fill="none" stroke="#1f72b2" stroke-width="1.25"/><path d="M392.7 660.8V664.2Q392.8 665.3 394.3 665.4" fill="none" stroke="#1f72b2" stroke-width="1.3" stroke-linecap="round"/><circle cx="392.7" cy="658.6" r="0.85" fill="#1f72b2"/></svg>
<div class="a t" style="left:421.2px;top:656.30px;font-size:13px;line-height:13px;color:#0a0a0a;letter-spacing:0.048px;">003</div>
<div class="a t" style="left:501.3px;top:656.30px;font-size:13px;line-height:13px;color:#0a0a0a;letter-spacing:-0.126px;">Dodavatel - školení 2</div>
<div class="a t" style="left:851.8px;top:656.30px;font-size:13px;line-height:13px;color:#0a0a0a;letter-spacing:0.037px;">12345678</div>
<div class="a t" style="left:951.6px;top:656.30px;font-size:13px;line-height:13px;color:#0a0a0a;letter-spacing:-0.075px;">20. 5. 2025 12:58</div>
<div class="a t" style="left:1101.2px;top:656.30px;font-size:13px;line-height:13px;color:#0a0a0a;letter-spacing:-0.255px;">Otevřeno</div>
<svg class="a" style="left:1307.3px;top:655.2px" width="12" height="12" viewBox="1307.3 655.2 12 12" ><path d="M1309.7 657.6L1316.8999999999999 664.8000000000001M1316.8999999999999 657.6L1309.7 664.8000000000001" stroke="#d0202a" stroke-width="1.9"/></svg>
<svg class="a" style="left:1447.3px;top:655.2px" width="12" height="12" viewBox="1447.3 655.2 12 12" ><path d="M1449.7 657.6L1456.8999999999999 664.8000000000001M1456.8999999999999 657.6L1449.7 664.8000000000001" stroke="#d0202a" stroke-width="1.9"/></svg>
<div class="a" style="left:347px;top:674px;width:1222px;height:1px;background:#dedede"></div>
<svg class="a" style="left:358px;top:683px" width="18" height="8" viewBox="358 683 18 8" ><rect x="359.60" y="685.45" width="3.1" height="3.1" rx="1.3" fill="none" stroke="#1f72b2" stroke-width="1.15"/><rect x="365.40" y="685.45" width="3.1" height="3.1" rx="1.3" fill="none" stroke="#1f72b2" stroke-width="1.15"/><rect x="371.20" y="685.45" width="3.1" height="3.1" rx="1.3" fill="none" stroke="#1f72b2" stroke-width="1.15"/></svg>
<svg class="a" style="left:384px;top:678px" width="18" height="18" viewBox="384 678 18 18" ><circle cx="393" cy="687" r="7.4" fill="none" stroke="#1f72b2" stroke-width="1.25"/><path d="M392.7 685.8V689.2Q392.8 690.3 394.3 690.4" fill="none" stroke="#1f72b2" stroke-width="1.3" stroke-linecap="round"/><circle cx="392.7" cy="683.6" r="0.85" fill="#1f72b2"/></svg>
<div class="a t" style="left:421.2px;top:681.30px;font-size:13px;line-height:13px;color:#0a0a0a;letter-spacing:0.048px;">002</div>
<div class="a t" style="left:501.3px;top:681.30px;font-size:13px;line-height:13px;color:#0a0a0a;letter-spacing:-0.126px;">Dodavatel - školení 3</div>
<div class="a t" style="left:851.8px;top:681.30px;font-size:13px;line-height:13px;color:#0a0a0a;letter-spacing:0.037px;">12345678</div>
<div class="a t" style="left:951.6px;top:681.30px;font-size:13px;line-height:13px;color:#0a0a0a;letter-spacing:-0.075px;">20. 5. 2025 12:57</div>
<div class="a t" style="left:1101.2px;top:681.30px;font-size:13px;line-height:13px;color:#0a0a0a;letter-spacing:-0.255px;">Otevřeno</div>
<svg class="a" style="left:1307.3px;top:680.2px" width="12" height="12" viewBox="1307.3 680.2 12 12" ><path d="M1309.7 682.6L1316.8999999999999 689.8000000000001M1316.8999999999999 682.6L1309.7 689.8000000000001" stroke="#d0202a" stroke-width="1.9"/></svg>
<svg class="a" style="left:1447.3px;top:680.2px" width="12" height="12" viewBox="1447.3 680.2 12 12" ><path d="M1449.7 682.6L1456.8999999999999 689.8000000000001M1456.8999999999999 682.6L1449.7 689.8000000000001" stroke="#d0202a" stroke-width="1.9"/></svg>
<div class="a" style="left:347px;top:699px;width:1222px;height:1px;background:#dedede"></div>
<svg class="a" style="left:358px;top:708px" width="18" height="8" viewBox="358 708 18 8" ><rect x="359.60" y="710.45" width="3.1" height="3.1" rx="1.3" fill="none" stroke="#1f72b2" stroke-width="1.15"/><rect x="365.40" y="710.45" width="3.1" height="3.1" rx="1.3" fill="none" stroke="#1f72b2" stroke-width="1.15"/><rect x="371.20" y="710.45" width="3.1" height="3.1" rx="1.3" fill="none" stroke="#1f72b2" stroke-width="1.15"/></svg>
<svg class="a" style="left:384px;top:703px" width="18" height="18" viewBox="384 703 18 18" ><circle cx="393" cy="712" r="7.4" fill="none" stroke="#1f72b2" stroke-width="1.25"/><path d="M392.7 710.8V714.2Q392.8 715.3 394.3 715.4" fill="none" stroke="#1f72b2" stroke-width="1.3" stroke-linecap="round"/><circle cx="392.7" cy="708.6" r="0.85" fill="#1f72b2"/></svg>
<div class="a t" style="left:421.2px;top:706.30px;font-size:13px;line-height:13px;color:#0a0a0a;letter-spacing:-0.602px;">001</div>
<div class="a t" style="left:501.3px;top:706.30px;font-size:13px;line-height:13px;color:#0a0a0a;letter-spacing:-0.126px;">Dodavatel - školení 4</div>
<div class="a t" style="left:851.8px;top:706.30px;font-size:13px;line-height:13px;color:#0a0a0a;letter-spacing:0.037px;">12345678</div>
<div class="a t" style="left:951.6px;top:706.30px;font-size:13px;line-height:13px;color:#0a0a0a;letter-spacing:-0.075px;">20. 5. 2025 12:56</div>
<div class="a t" style="left:1101.2px;top:706.30px;font-size:13px;line-height:13px;color:#0a0a0a;letter-spacing:-0.255px;">Otevřeno</div>
<svg class="a" style="left:1307.3px;top:705.2px" width="12" height="12" viewBox="1307.3 705.2 12 12" ><path d="M1309.7 707.6L1316.8999999999999 714.8000000000001M1316.8999999999999 707.6L1309.7 714.8000000000001" stroke="#d0202a" stroke-width="1.9"/></svg>
<svg class="a" style="left:1447.3px;top:705.2px" width="12" height="12" viewBox="1447.3 705.2 12 12" ><path d="M1449.7 707.6L1456.8999999999999 714.8000000000001M1456.8999999999999 707.6L1449.7 714.8000000000001" stroke="#d0202a" stroke-width="1.9"/></svg>
<div class="a" style="left:1512px;top:612px;width:57px;height:112px;background:linear-gradient(to right,rgba(0,0,0,0),rgba(0,0,0,.095))"></div>
</div></div>
<div class="a panel" style="left:329px;top:758px;width:1258px;height:389px;"></div>
<div class="a t" style="left:341.2px;top:774.06px;font-size:18px;line-height:18px;font-weight:bold;color:#2b3440;letter-spacing:-0.705px;">Nabídky</div>
<div class="a" style="left:329px;top:799px;width:1258px;height:3px;background:#1a6fb0"></div>
<div class="a t" style="left:730.6px;top:824.30px;font-size:13px;line-height:13px;color:#555;letter-spacing:0.249px;">Lhůta:</div>
<div class="a" style="left:777px;top:822px;width:224px;height:21px;background:#f2f2f2;border:1px solid #cfcfcf;border-radius:4px"></div>
<div class="a t" style="left:782.2px;top:826.00px;font-size:13px;line-height:13px;font-weight:bold;color:#111;letter-spacing:0.094px;">20. 5. 2025</div>
<svg class="a" style="left:881.7px;top:825.5px" width="14" height="13" viewBox="881.7 825.5 14 13" ><rect x="883.2" y="828.2" width="11" height="9" rx="0.8" fill="none" stroke="#888" stroke-width="1"/><path d="M883.2 830.8H894.2M885.9000000000001 826.5V829.0M891.5 826.5V829.0" stroke="#888" stroke-width="1"/></svg>
<div class="a t" style="left:903.6px;top:826.00px;font-size:13px;line-height:13px;font-weight:bold;color:#111;letter-spacing:-0.062px;">13:10</div>
<div class="a" style="left:1011px;top:822px;width:204px;height:20px;background:#e3e3e3;border-radius:5px"></div>
<div class="a t" style="left:1078.6px;top:826.00px;font-size:13px;line-height:13px;color:#999;letter-spacing:-0.113px;">Výpočet lhůt</div>
<div class="a t" style="left:640.5px;top:864.90px;font-size:13px;line-height:13px;color:#555;letter-spacing:-0.156px;">Datum a čas otevírání:</div>
<div class="a" style="left:777px;top:863.4px;width:438px;height:20.600000000000023px;background:#f2f2f2;border:1px solid #cfcfcf;border-radius:4px"></div>
<svg class="a" style="left:989px;top:866.5px" width="14" height="13" viewBox="989 866.5 14 13" ><rect x="990.5" y="869.2" width="11" height="9" rx="0.8" fill="none" stroke="#888" stroke-width="1"/><path d="M990.5 871.8H1001.5M993.2 867.5V870.0M998.8 867.5V870.0" stroke="#888" stroke-width="1"/></svg>
<div class="a" style="left:777px;top:904.5px;width:438px;height:20.5px;background:#e3e3e3;border-radius:5px"></div>
<div class="a t" style="left:905.6px;top:909.00px;font-size:13px;line-height:13px;color:#999;letter-spacing:-0.304px;">Odeslání výzvy k podání nabídek</div>
<div class="a t" style="left:344.0px;top:948.30px;font-size:15px;line-height:15px;font-weight:bold;color:#2b3440;letter-spacing:-0.169px;">Přehled podaných nabídek</div>
<div class="a" style="left:344px;top:970px;width:1228px;height:158px;border:1px solid #2479b9;border-radius:9px;background:#fff;overflow:hidden"><div class="a" style="left:-345px;top:-971px;width:1906px;height:1152px">
<div class="a" style="left:345px;top:971px;width:1226px;height:156px;border:2px solid #dfe0e2;border-top-width:1.5px;border-bottom-width:2.5px;border-radius:8px"></div>
<svg class="a" style="left:354.2px;top:984px" width="18" height="18" viewBox="354.2 984 18 18" ><path d="M359.8 987.6H357.2A1.4 1.4 0 0 0 355.8 989V999.1A1.4 1.4 0 0 0 357.2 1000.5H362.59999999999997" fill="none" stroke="#1f72b2" stroke-width="1.2" stroke-linecap="round"/><path d="M364.2 987.6H366.8A1.4 1.4 0 0 1 368.2 989V991.5" fill="none" stroke="#1f72b2" stroke-width="1.2" stroke-linecap="round"/><path d="M359.59999999999997 988.6V987.4H360.59999999999997A1.5 1.5 0 0 1 363.5 987.4H364.5V988.6" fill="none" stroke="#1f72b2" stroke-width="1.2" stroke-linejoin="round"/><path d="M358.8 992H362.2" stroke="#1f72b2" stroke-width="1.5"/><path d="M358.8 994.5H361.2M358.8 997H360.4" stroke="#1f72b2" stroke-width="1.2"/><path d="M366.80 991.90L368.45 993.64L370.78 994.20L370.10 996.50L370.78 998.80L368.45 999.36L366.80 1001.10L365.15 999.36L362.82 998.80L363.50 996.50L362.82 994.20L365.15 993.64Z" fill="none" stroke="#1f72b2" stroke-width="1.15" stroke-linejoin="round"/><circle cx="366.8" cy="996.5" r="1.1" fill="#1f72b2"/></svg>
<div class="a t" style="left:375.2px;top:987.00px;font-size:13px;line-height:13px;color:#1f72b2;letter-spacing:-0.249px;">Evidovat nabídku</div>
<div class="a" style="left:476.85px;top:984px;width:1.5px;height:18px;background:#1f72b2"></div>
<svg class="a" style="left:487px;top:984px" width="15" height="18" viewBox="487 984 15 18" ><path d="M492 987.2H489.8A1.2 1.2 0 0 0 488.6 988.4V999.6A1.2 1.2 0 0 0 489.8 1000.4H499.2A1.2 1.2 0 0 0 500.4 999.6V988.4A1.2 1.2 0 0 0 499.2 987.2H497" fill="none" stroke="#1f72b2" stroke-width="1.2"/><path d="M491.8 989.2V987.2H493A1.5 1.5 0 0 1 496 987.2H497.2V989.2Z" fill="none" stroke="#1f72b2" stroke-width="1.2" stroke-linejoin="round"/><path d="M491.5 992.3H497.5M491.5 994.8H497.5M491.5 997.3H497.5" stroke="#1f72b2" stroke-width="1.3"/></svg>
<div class="a t" style="left:507.0px;top:987.00px;font-size:13px;line-height:13px;color:#1f72b2;letter-spacing:-0.196px;">Zadání bodových hodnot</div>
<div class="a" style="left:651.65px;top:984px;width:1.5px;height:18px;background:#1f72b2"></div>
<div class="a" style="left:650.3px;top:972.3px;width:134.6px;height:38px;border:1px solid #e21e26"></div>
<div class="a" style="left:654px;top:979px;width:128px;height:28px;background:#4caf50;border-radius:6px"></div>
<svg class="a" style="left:660px;top:984.2px" width="18" height="18" viewBox="660 984.2 18 18" ><path d="M665.6 987.8000000000001H663A1.4 1.4 0 0 0 661.6 989.2V999.3000000000001A1.4 1.4 0 0 0 663 1000.7H668.4" fill="none" stroke="#e8f5e9" stroke-width="1.2" stroke-linecap="round"/><path d="M670 987.8000000000001H672.6A1.4 1.4 0 0 1 674 989.2V991.7" fill="none" stroke="#e8f5e9" stroke-width="1.2" stroke-linecap="round"/><path d="M665.4 988.8000000000001V987.6H666.4A1.5 1.5 0 0 1 669.3 987.6H670.3V988.8000000000001" fill="none" stroke="#e8f5e9" stroke-width="1.2" stroke-linejoin="round"/><path d="M664.6 992.2H668" stroke="#e8f5e9" stroke-width="1.5"/><path d="M664.6 994.7H667M664.6 997.2H666.2" stroke="#e8f5e9" stroke-width="1.2"/><circle cx="672.6" cy="996.7" r="4.2" fill="none" stroke="#e8f5e9" stroke-width="1.2"/><path d="M670.3 996.7H674.6M672.9 995.0L674.6 996.7L672.9 998.4000000000001" fill="none" stroke="#e8f5e9" stroke-width="1.2" stroke-linecap="round" stroke-linejoin="round"/></svg>
<div class="a t" style="left:681.5px;top:986.50px;font-size:13px;line-height:13px;color:#fff;letter-spacing:-0.253px;">Ukončit otevírání</div>
<svg class="a" style="left:790px;top:984px" width="18" height="18" viewBox="790 984 18 18" ><path d="M795.6 987.6H793A1.4 1.4 0 0 0 791.6 989V999.1A1.4 1.4 0 0 0 793 1000.5H798.4" fill="none" stroke="#1f72b2" stroke-width="1.2" stroke-linecap="round"/><path d="M800 987.6H802.6A1.4 1.4 0 0 1 804 989V991.5" fill="none" stroke="#1f72b2" stroke-width="1.2" stroke-linecap="round"/><path d="M795.4 988.6V987.4H796.4A1.5 1.5 0 0 1 799.3 987.4H800.3V988.6" fill="none" stroke="#1f72b2" stroke-width="1.2" stroke-linejoin="round"/><path d="M794.6 992H798" stroke="#1f72b2" stroke-width="1.5"/><path d="M794.6 994.5H797M794.6 997H796.2" stroke="#1f72b2" stroke-width="1.2"/><circle cx="802.6" cy="996.5" r="4.2" fill="none" stroke="#1f72b2" stroke-width="1.2"/><path d="M800.3 996.5H804.6M802.9 994.8L804.6 996.5L802.9 998.2" fill="none" stroke="#1f72b2" stroke-width="1.2" stroke-linecap="round" stroke-linejoin="round"/></svg>
<div class="a t" style="left:811.0px;top:987.00px;font-size:13px;line-height:13px;color:#1f72b2;letter-spacing:-0.147px;">Stáhnout nabídky</div>
<div class="a" style="left:915.75px;top:984px;width:1.5px;height:18px;background:#1f72b2"></div>
<svg class="a" style="left:924.3px;top:984px" width="18" height="18" viewBox="924.3 984 18 18" ><path d="M928.9 989.2V986.4A0.8 0.8 0 0 1 929.6999999999999 985.6H936.9A0.8 0.8 0 0 1 937.6999999999999 986.4V989.2" fill="none" stroke="#1f72b2" stroke-width="1.2"/><path d="M928.9 996.6H927.0999999999999A1.2 1.2 0 0 1 925.9 995.4V990.4A1.2 1.2 0 0 1 927.0999999999999 989.2H939.5A1.2 1.2 0 0 1 940.6999999999999 990.4V995.4A1.2 1.2 0 0 1 939.5 996.6H937.6999999999999" fill="none" stroke="#1f72b2" stroke-width="1.2"/><rect x="928.9" y="993.2" width="8.8" height="7.2" rx="0.6" fill="none" stroke="#1f72b2" stroke-width="1.2"/><path d="M930.5999999999999 995.6H935.9M930.5999999999999 997.8H934.6999999999999M927.5999999999999 991.3H928.5999999999999" stroke="#1f72b2" stroke-width="1.1"/></svg>
<svg class="a" style="left:944.9px;top:989.2px" width="9" height="8" viewBox="944.9 989.2 9 8" ><path d="M946.5 990.8000000000001H952.3L949.4 995.7Z" fill="none" stroke="#1f72b2" stroke-width="1.25" stroke-linejoin="round"/></svg>
<div class="a" style="left:963.45px;top:984px;width:1.5px;height:18px;background:#1f72b2"></div>
<svg class="a" style="left:973.8px;top:984px" width="15" height="18" viewBox="973.8 984 15 18" ><path d="M978.1999999999999 990.4H976.4A1 1 0 0 0 975.4 991.4V999.4A1 1 0 0 0 976.4 1000.4H986.1999999999999A1 1 0 0 0 987.1999999999999 999.4V991.4A1 1 0 0 0 986.1999999999999 990.4H984.4" fill="none" stroke="#1f72b2" stroke-width="1.2"/><path d="M981.3 993V986M979.0 988.2L981.3 985.9L983.5999999999999 988.2" fill="none" stroke="#1f72b2" stroke-width="1.2" stroke-linecap="round" stroke-linejoin="round"/></svg>
<svg class="a" style="left:991.9px;top:989.2px" width="9" height="8" viewBox="991.9 989.2 9 8" ><path d="M993.5 990.8000000000001H999.3L996.4 995.7Z" fill="none" stroke="#1f72b2" stroke-width="1.25" stroke-linejoin="round"/></svg>
<div class="a" style="left:1010.45px;top:984px;width:1.5px;height:18px;background:#1f72b2"></div>
<svg class="a" style="left:1486px;top:984px" width="18" height="18" viewBox="1486 984 18 18" ><path d="M1487.8 986.6A0.9 0.9 0 0 1 1488.6 985.7H1501.4A0.9 0.9 0 0 1 1502.2 986.6C1502 990 1498.5 991.8 1496.7 992.6V998.6L1493.6 1000.4V992.6C1491.5 991.8 1488 990 1487.8 986.6Z" fill="none" stroke="#1f72b2" stroke-width="1.2" stroke-linejoin="round"/></svg>
<div class="a" style="left:1509.85px;top:984px;width:1.5px;height:18px;background:#1f72b2"></div>
<svg class="a" style="left:1522px;top:989px" width="9" height="8" viewBox="1522 989 9 8" ><path d="M1523.6 990.6H1529.4L1526.5 995.5Z" fill="none" stroke="#1f72b2" stroke-width="1.25" stroke-linejoin="round"/></svg>
<div class="a t" style="left:1539.0px;top:989.00px;font-size:13px;line-height:13px;color:#1f72b2;letter-spacing:-0.109px;">MW</div>
<div class="a" style="left:1567.65px;top:984px;width:1.5px;height:18px;background:#1f72b2"></div>
<div class="a" style="left:347px;top:1012px;width:1222px;height:1px;background:#dadada"></div>
<div class="a" style="left:347px;top:1013px;width:1222px;height:36px;background:#f2f2f2"></div>
<div class="a" style="left:347px;top:1049px;width:1222px;height:1px;background:#d4d4d4"></div>
<div class="a" style="left:412px;top:1013px;width:1px;height:36px;background:#d9d9d9"></div>
<div class="a" style="left:492px;top:1013px;width:1px;height:36px;background:#d9d9d9"></div>
<div class="a" style="left:842px;top:1013px;width:1px;height:36px;background:#d9d9d9"></div>
<div class="a" style="left:942px;top:1013px;width:1px;height:36px;background:#d9d9d9"></div>
<div class="a" style="left:1092px;top:1013px;width:1px;height:36px;background:#d9d9d9"></div>
<div class="a" style="left:1242px;top:1013px;width:1px;height:36px;background:#d9d9d9"></div>
<div class="a" style="left:1422px;top:1013px;width:1px;height:36px;background:#d9d9d9"></div>
<div class="a" style="left:1562px;top:1013px;width:1px;height:36px;background:#d9d9d9"></div>
<svg class="a" style="left:371.2px;top:1022px" width="18" height="18" viewBox="371.2 1022 18 18" ><rect x="372.8" y="1023.6" width="14.8" height="14.8" rx="0.8" fill="none" stroke="#555" stroke-width="1.2"/><path d="M375.2 1028.8H381.8M384.4 1028.8H385.2M375.2 1033.2H377.0M379.59999999999997 1033.2H385.2" stroke="#555" stroke-width="1.1"/><circle cx="383.09999999999997" cy="1028.8" r="1.4" fill="none" stroke="#555" stroke-width="1.1"/><circle cx="378.3" cy="1033.2" r="1.4" fill="none" stroke="#555" stroke-width="1.1"/></svg>
<div class="a t" style="left:421.1px;top:1022.60px;font-size:13px;line-height:13px;font-weight:bold;color:#111;letter-spacing:-0.624px;">Číslo</div>
<svg class="a" style="left:454.6px;top:1022.4px" width="13" height="13" viewBox="454.6 1022.4 13 13" ><path d="M461.1 1034.4V1024.4M456.40000000000003 1029.0L461.1 1024.3L465.8 1029.0" fill="none" stroke="#111" stroke-width="1.3" stroke-linejoin="round"/></svg>
<svg class="a" style="left:474.8px;top:1025px" width="9" height="8" viewBox="474.8 1025 9 8" ><path d="M476.40000000000003 1026.6H482.2L479.3 1031.5Z" fill="none" stroke="#444" stroke-width="1.1" stroke-linejoin="round"/></svg>
<div class="a t" style="left:501.1px;top:1022.60px;font-size:13px;line-height:13px;color:#5c5c5c;letter-spacing:-0.205px;">Název dodavatele</div>
<svg class="a" style="left:824.8px;top:1025px" width="9" height="8" viewBox="824.8 1025 9 8" ><path d="M826.4 1026.6H832.1999999999999L829.3 1031.5Z" fill="none" stroke="#444" stroke-width="1.1" stroke-linejoin="round"/></svg>
<div class="a t" style="left:851.5px;top:1022.60px;font-size:13px;line-height:13px;color:#5c5c5c;letter-spacing:-1.262px;">IČO</div>
<svg class="a" style="left:924.3px;top:1025px" width="9" height="8" viewBox="924.3 1025 9 8" ><path d="M925.9 1026.6H931.6999999999999L928.8 1031.5Z" fill="none" stroke="#444" stroke-width="1.1" stroke-linejoin="round"/></svg>
<div class="a t" style="left:951.6px;top:1022.60px;font-size:13px;line-height:13px;color:#5c5c5c;letter-spacing:-0.207px;">Datum podání</div>
<svg class="a" style="left:1074.4px;top:1025px" width="9" height="8" viewBox="1074.4 1025 9 8" ><path d="M1076.0 1026.6H1081.8000000000002L1078.9 1031.5Z" fill="none" stroke="#444" stroke-width="1.1" stroke-linejoin="round"/></svg>
<div class="a t" style="left:1101.0px;top:1022.60px;font-size:13px;line-height:13px;color:#5c5c5c;letter-spacing:-0.405px;">Stav</div>
<svg class="a" style="left:1224.4px;top:1025px" width="9" height="8" viewBox="1224.4 1025 9 8" ><path d="M1226.0 1026.6H1231.8000000000002L1228.9 1031.5Z" fill="none" stroke="#444" stroke-width="1.1" stroke-linejoin="round"/></svg>
<div class="a t" style="left:1251.2px;top:1022.60px;font-size:13px;line-height:13px;color:#5c5c5c;letter-spacing:-0.266px;">Označena jako nepodaná</div>
<svg class="a" style="left:1404.7px;top:1025px" width="9" height="8" viewBox="1404.7 1025 9 8" ><path d="M1406.3 1026.6H1412.1000000000001L1409.2 1031.5Z" fill="none" stroke="#444" stroke-width="1.1" stroke-linejoin="round"/></svg>
<div class="a t" style="left:1431.2px;top:1022.60px;font-size:13px;line-height:13px;color:#5c5c5c;letter-spacing:-0.150px;">Podaná po lhůtě</div>
<svg class="a" style="left:1544.4px;top:1025px" width="9" height="8" viewBox="1544.4 1025 9 8" ><path d="M1546.0 1026.6H1551.8000000000002L1548.9 1031.5Z" fill="none" stroke="#444" stroke-width="1.1" stroke-linejoin="round"/></svg>
<svg class="a" style="left:358px;top:1058px" width="18" height="8" viewBox="358 1058 18 8" ><rect x="359.60" y="1060.45" width="3.1" height="3.1" rx="1.3" fill="none" stroke="#1f72b2" stroke-width="1.15"/><rect x="365.40" y="1060.45" width="3.1" height="3.1" rx="1.3" fill="none" stroke="#1f72b2" stroke-width="1.15"/><rect x="371.20" y="1060.45" width="3.1" height="3.1" rx="1.3" fill="none" stroke="#1f72b2" stroke-width="1.15"/></svg>
<svg class="a" style="left:384px;top:1053px" width="18" height="18" viewBox="384 1053 18 18" ><circle cx="393" cy="1062" r="7.4" fill="none" stroke="#1f72b2" stroke-width="1.25"/><path d="M392.7 1060.8V1064.2Q392.8 1065.3 394.3 1065.4" fill="none" stroke="#1f72b2" stroke-width="1.3" stroke-linecap="round"/><circle cx="392.7" cy="1058.6" r="0.85" fill="#1f72b2"/></svg>
<div class="a t" style="left:421.2px;top:1056.30px;font-size:13px;line-height:13px;color:#0a0a0a;letter-spacing:-0.602px;">001</div>
<div class="a t" style="left:501.3px;top:1056.30px;font-size:13px;line-height:13px;color:#0a0a0a;letter-spacing:-0.126px;">Dodavatel - školení 2</div>
<div class="a t" style="left:851.8px;top:1056.30px;font-size:13px;line-height:13px;color:#0a0a0a;letter-spacing:0.037px;">12345678</div>
<div class="a t" style="left:951.6px;top:1056.30px;font-size:13px;line-height:13px;color:#0a0a0a;letter-spacing:-0.075px;">20. 5. 2025 13:07</div>
<div class="a t" style="left:1101.2px;top:1056.30px;font-size:13px;line-height:13px;color:#0a0a0a;letter-spacing:-0.255px;">Otevřeno</div>
<svg class="a" style="left:1327.3px;top:1055.2px" width="12" height="12" viewBox="1327.3 1055.2 12 12" ><path d="M1329.7 1057.6000000000001L1336.8999999999999 1064.8M1336.8999999999999 1057.6000000000001L1329.7 1064.8" stroke="#d0202a" stroke-width="1.9"/></svg>
<svg class="a" style="left:1487.5px;top:1055.2px" width="12" height="12" viewBox="1487.5 1055.2 12 12" ><path d="M1489.9 1057.6000000000001L1497.1 1064.8M1497.1 1057.6000000000001L1489.9 1064.8" stroke="#d0202a" stroke-width="1.9"/></svg>
<div class="a" style="left:347px;top:1074px;width:1222px;height:1px;background:#dedede"></div>
<svg class="a" style="left:358px;top:1083px" width="18" height="8" viewBox="358 1083 18 8" ><rect x="359.60" y="1085.45" width="3.1" height="3.1" rx="1.3" fill="none" stroke="#1f72b2" stroke-width="1.15"/><rect x="365.40" y="1085.45" width="3.1" height="3.1" rx="1.3" fill="none" stroke="#1f72b2" stroke-width="1.15"/><rect x="371.20" y="1085.45" width="3.1" height="3.1" rx="1.3" fill="none" stroke="#1f72b2" stroke-width="1.15"/></svg>
<svg class="a" style="left:384px;top:1078px" width="18" height="18" viewBox="384 1078 18 18" ><circle cx="393" cy="1087" r="7.4" fill="none" stroke="#1f72b2" stroke-width="1.25"/><path d="M392.7 1085.8V1089.2Q392.8 1090.3 394.3 1090.4" fill="none" stroke="#1f72b2" stroke-width="1.3" stroke-linecap="round"/><circle cx="392.7" cy="1083.6" r="0.85" fill="#1f72b2"/></svg>
<div class="a t" style="left:421.2px;top:1081.30px;font-size:13px;line-height:13px;color:#0a0a0a;letter-spacing:0.048px;">002</div>
<div class="a t" style="left:501.3px;top:1081.30px;font-size:13px;line-height:13px;color:#0a0a0a;letter-spacing:-0.126px;">Dodavatel - školení 3</div>
<div class="a t" style="left:851.8px;top:1081.30px;font-size:13px;line-height:13px;color:#0a0a0a;letter-spacing:0.037px;">12345678</div>
<div class="a t" style="left:951.6px;top:1081.30px;font-size:13px;line-height:13px;color:#0a0a0a;letter-spacing:-0.075px;">20. 5. 2025 13:08</div>
<div class="a t" style="left:1101.2px;top:1081.30px;font-size:13px;line-height:13px;color:#0a0a0a;letter-spacing:-0.255px;">Otevřeno</div>
<svg class="a" style="left:1327.3px;top:1080.2px" width="12" height="12" viewBox="1327.3 1080.2 12 12" ><path d="M1329.7 1082.6000000000001L1336.8999999999999 1089.8M1336.8999999999999 1082.6000000000001L1329.7 1089.8" stroke="#d0202a" stroke-width="1.9"/></svg>
<svg class="a" style="left:1487.5px;top:1080.2px" width="12" height="12" viewBox="1487.5 1080.2 12 12" ><path d="M1489.9 1082.6000000000001L1497.1 1089.8M1497.1 1082.6000000000001L1489.9 1089.8" stroke="#d0202a" stroke-width="1.9"/></svg>
<div class="a" style="left:347px;top:1099px;width:1222px;height:1px;background:#dedede"></div>
<svg class="a" style="left:358px;top:1108px" width="18" height="8" viewBox="358 1108 18 8" ><rect x="359.60" y="1110.45" width="3.1" height="3.1" rx="1.3" fill="none" stroke="#1f72b2" stroke-width="1.15"/><rect x="365.40" y="1110.45" width="3.1" height="3.1" rx="1.3" fill="none" stroke="#1f72b2" stroke-width="1.15"/><rect x="371.20" y="1110.45" width="3.1" height="3.1" rx="1.3" fill="none" stroke="#1f72b2" stroke-width="1.15"/></svg>
<svg class="a" style="left:384px;top:1103px" width="18" height="18" viewBox="384 1103 18 18" ><circle cx="393" cy="1112" r="7.4" fill="none" stroke="#1f72b2" stroke-width="1.25"/><path d="M392.7 1110.8V1114.2Q392.8 1115.3 394.3 1115.4" fill="none" stroke="#1f72b2" stroke-width="1.3" stroke-linecap="round"/><circle cx="392.7" cy="1108.6" r="0.85" fill="#1f72b2"/></svg>
<div class="a t" style="left:421.2px;top:1106.30px;font-size:13px;line-height:13px;color:#0a0a0a;letter-spacing:0.048px;">003</div>
<div class="a t" style="left:501.3px;top:1106.30px;font-size:13px;line-height:13px;color:#0a0a0a;letter-spacing:-0.126px;">Dodavatel - školení 4</div>
<div class="a t" style="left:851.8px;top:1106.30px;font-size:13px;line-height:13px;color:#0a0a0a;letter-spacing:0.037px;">12345678</div>
<div class="a t" style="left:951.6px;top:1106.30px;font-size:13px;line-height:13px;color:#0a0a0a;letter-spacing:-0.075px;">20. 5. 2025 13:09</div>
<div class="a t" style="left:1101.2px;top:1106.30px;font-size:13px;line-height:13px;color:#0a0a0a;letter-spacing:-0.255px;">Otevřeno</div>
<svg class="a" style="left:1327.3px;top:1105.2px" width="12" height="12" viewBox="1327.3 1105.2 12 12" ><path d="M1329.7 1107.6000000000001L1336.8999999999999 1114.8M1336.8999999999999 1107.6000000000001L1329.7 1114.8" stroke="#d0202a" stroke-width="1.9"/></svg>
<svg class="a" style="left:1487.5px;top:1105.2px" width="12" height="12" viewBox="1487.5 1105.2 12 12" ><path d="M1489.9 1107.6000000000001L1497.1 1114.8M1497.1 1107.6000000000001L1489.9 1114.8" stroke="#d0202a" stroke-width="1.9"/></svg>
<div class="a" style="left:1512px;top:1012px;width:57px;height:112px;background:linear-gradient(to right,rgba(0,0,0,0),rgba(0,0,0,.095))"></div>
</div></div>
</body></html>
